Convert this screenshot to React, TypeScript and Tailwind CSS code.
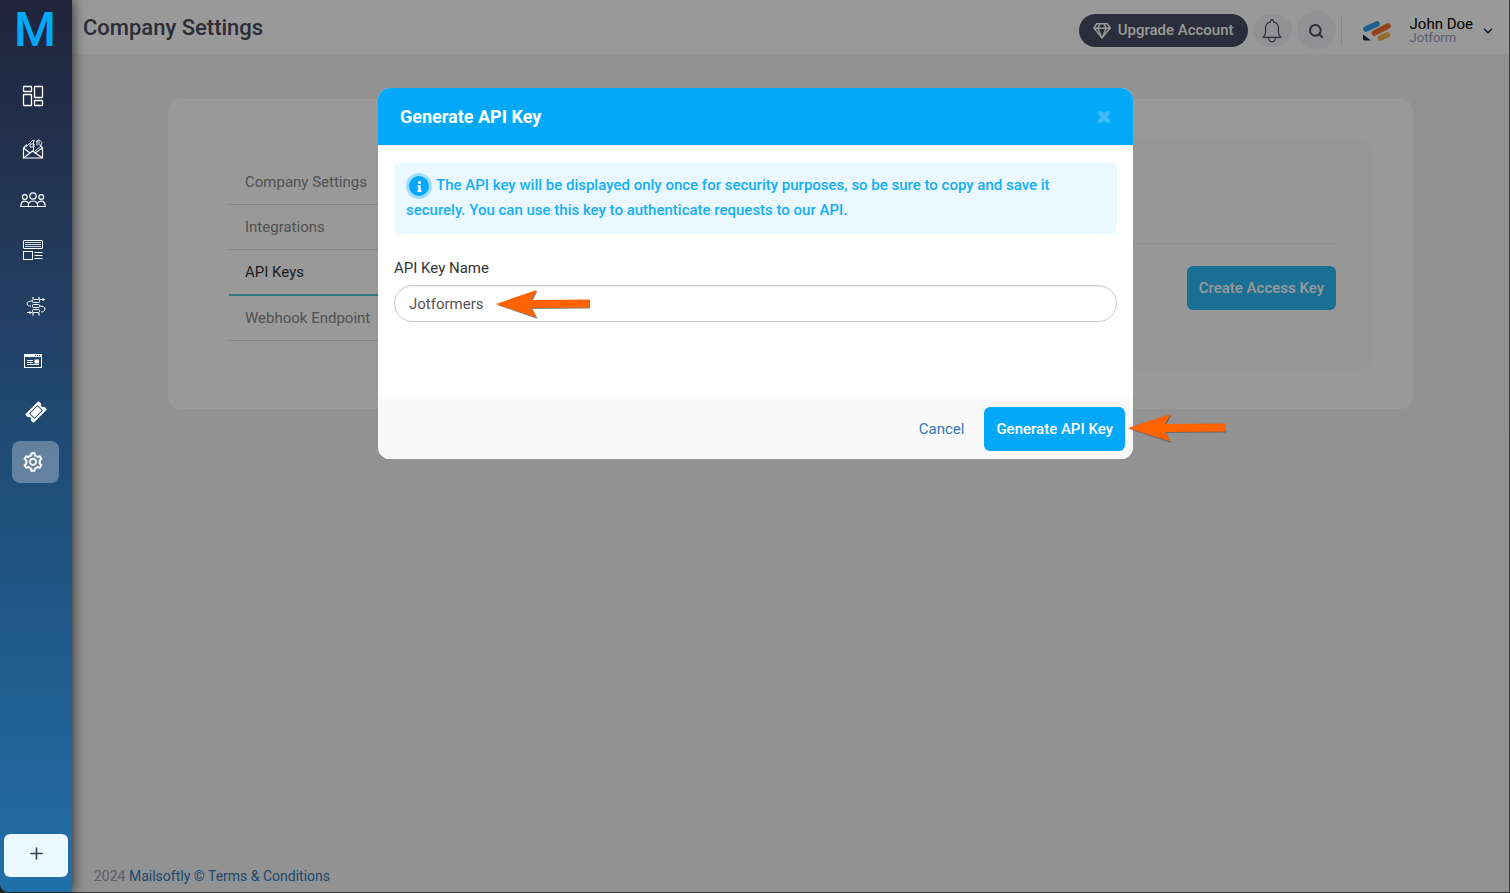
// REACT
import React from 'react';

// ICONS
import { AiOutlineSetting } from 'react-icons/ai';
import { FaInfo, FaRegGem } from 'react-icons/fa';
import { ChevronDown, Plus, Search, X } from 'lucide-react';

// EXTERNAL
import clsx from 'clsx';

const navItems = [
  { label: 'Dashboard', icon: <DashboardIcon />, size: 'h-[42px]' },
  { label: 'Campaigns', icon: <MailIcon />, size: 'h-[46px]' },
  { label: 'Contacts', icon: <PeopleIcon />, size: 'h-[38px]' },
  { label: 'Templates', icon: <TemplateIcon />, size: 'h-[44px]' },
  { label: 'Automations', icon: <FlowIcon />, size: 'h-[50px]', wide: true },
  { label: 'Forms', icon: <FormIcon />, size: 'h-[42px]' },
  { label: 'Tickets', icon: <TicketIcon />, size: 'h-[41px]', wide: true },
  {
    label: 'Settings',
    icon: <AiOutlineSetting size={22} stroke="currentColor" strokeWidth={24} />,
    size: 'h-[42px]',
    active: true,
  },
];

const settingsLinks = [
  'Company Settings',
  'Integrations',
  'API Keys',
  'Webhook Endpoint',
];

export default function App() {
  return (
    <div className="relative flex min-h-screen border-b border-r border-[#3c3c3c] bg-[#3c3c3c] font-[Roboto,sans-serif] text-[15px] leading-5">
      <Sidebar />

      <div className="flex min-w-0 flex-1 flex-col bg-[#f3f3f3]">
        <Header />
        <main className="mr-1 border-b border-r border-[#eeeeee] pt-[45px] pr-[91px] pb-[22px] pl-24">
          <CompanySettings />
        </main>
        <footer className="mt-auto px-[22px] pb-[6px] text-sm text-[#989cab]">
          2024{' '}
          <a href="#terms" className="text-[#337ab7]">
            Mailsoftly © Terms &amp; Conditions
          </a>
        </footer>
      </div>

      {/* MODAL */}
      <div className="absolute inset-0 z-10 bg-black/40 pt-[88px] pr-4 pl-[18px]">
        <GenerateKeyModal />
      </div>
    </div>
  );
}

function Sidebar() {
  return (
    <aside className="z-20 flex w-[72px] shrink-0 flex-col rounded-bl-lg bg-linear-to-b from-[#20243b] via-[#1f4b75] to-[#2170a9] px-1 shadow-[2px_0_12px_rgba(0,0,0,0.6)]">
      <a
        href="#home"
        className="flex h-[60px] items-center pl-[10px] text-5xl font-medium text-[#03a9f8]"
      >
        M
      </a>
      <nav className="mt-[15px] flex flex-col gap-[9px] pl-2">
        {navItems.map((item) => (
          <a
            key={item.label}
            href="#nav"
            aria-label={item.label}
            className={clsx(
              'flex w-[47px] items-center justify-center rounded-lg text-white',
              item.size,
              item.wide ? 'pr-0' : 'pr-[5px]',
              item.active && 'bg-white/30'
            )}
          >
            {item.icon}
          </a>
        ))}
      </nav>
      <button
        aria-label="Create"
        className="mt-auto mb-[15px] flex h-[43px] items-center justify-center rounded-md bg-[#ebf8ff] pb-1 text-[#383e56]"
      >
        <Plus size={19} strokeWidth={2} />
      </button>
    </aside>
  );
}

function Header() {
  return (
    <header className="flex h-[54px] items-center justify-between bg-white pl-[11px] pr-[14px]">
      <h1 className="pt-0.5 text-[22px] leading-7 font-medium text-[#484b5e]">
        Company Settings
      </h1>
      <div className="flex items-center pt-[7px]">
        <button className="flex h-[33px] items-center gap-[7px] rounded-full bg-[#484c63] px-[14px] pb-0.5 font-medium text-white">
          <FaRegGem size={16} className="mt-0.5 w-[18px]" />
          Upgrade Account
        </button>
        <button
          aria-label="Notifications"
          className="ml-[5px] flex h-[33px] w-[39px] items-center justify-center rounded-full bg-[#f3f4f7] text-[#484c63]"
        >
          <BellIcon />
        </button>
        <button
          aria-label="Search"
          className="ml-[5px] flex size-[39px] items-center justify-center rounded-full bg-[#f3f4f7] text-[#484c63]"
        >
          <Search size={16} strokeWidth={3} />
        </button>
        <div className="ml-[5px] h-[30px] w-px bg-[#e0e0e6]" />
        <button className="flex items-center pl-5 text-left">
          <CompanyLogo />
          <span className="ml-[18px] flex flex-col pb-px">
            <span className="leading-4 text-black">John Doe</span>
            <span className="text-[13px] leading-3 text-[#9a9eb5]">
              Jotform
            </span>
          </span>
          <ChevronDown
            size={14}
            strokeWidth={2.5}
            className="ml-2 text-[#20243b]"
          />
        </button>
      </div>
    </header>
  );
}

function CompanySettings() {
  return (
    <section className="flex items-start rounded-xl bg-white py-[39px] pl-[61px] pr-[39px]">
      <ul className="mt-[22px] w-1/4">
        {settingsLinks.map((link) => (
          <li key={link}>
            <a
              href="#settings"
              className={clsx(
                'block px-4 py-3',
                link === 'API Keys'
                  ? 'border-b-2 border-[#4fc3d0] text-[#333333]'
                  : 'border-b border-[#dddddd] text-[#888888]'
              )}
            >
              {link}
            </a>
          </li>
        ))}
      </ul>
      <div className="ml-8 h-[232px] flex-1 rounded-xl bg-[#fcfcfc] px-[38px] pt-[105px]">
        <div className="flex justify-end border-t border-[#eeeeee] pt-[22px]">
          <button className="h-11 rounded-md bg-[#2eb9f8] px-3 font-medium text-white">
            Create Access Key
          </button>
        </div>
      </div>
    </section>
  );
}

function GenerateKeyModal() {
  return (
    <div
      role="dialog"
      aria-labelledby="modal-title"
      className="mx-auto max-w-[755px] rounded-xl bg-white"
    >
      <div className="flex h-[57px] items-center justify-between rounded-t-xl bg-[#03a9f8] pl-[22px] pr-[21px]">
        <h2 id="modal-title" className="text-lg font-bold text-white">
          Generate API Key
        </h2>
        <button aria-label="Close" className="text-[#42bdfa]">
          <X size={16} strokeWidth={6} />
        </button>
      </div>

      <div className="px-4 pt-[17px] pb-[77px]">
        <p className="rounded-md bg-[#ebf8ff] py-[11px] pl-3 pr-10 leading-[25px] font-medium text-[#13aff8]">
          <span className="-my-1 mr-1 inline-flex size-[26px] items-center justify-center rounded-full border-3 border-[#a0dcfb] bg-[#03a9f8] align-middle text-white">
            <FaInfo size={11} />
          </span>
          The API key will be displayed only once for security purposes, so be
          sure to copy and save it securely. You can use this key to
          authenticate requests to our API.
        </p>

        <label htmlFor="keyName" className="mt-6 block text-[#333333]">
          API Key Name
        </label>
        <div className="relative mt-[7px]">
          <input
            id="keyName"
            type="text"
            defaultValue="Jotformers"
            className="block h-[37px] w-full rounded-full border border-[#cccccc] px-[14px] text-[#555555] shadow-[inset_0_1px_1px_rgba(0,0,0,0.075)]"
          />
          <Arrow className="absolute top-1 left-[102px] w-[95px]" />
        </div>
      </div>

      <div className="flex h-[60px] items-center justify-end gap-5 rounded-b-xl bg-[#f9f9f9] pr-2">
        <button className="text-[#337ab7]">Cancel</button>
        <div className="relative">
          <button className="h-11 rounded-md bg-[#03a9f8] px-3 font-medium text-white">
            Generate API Key
          </button>
          <Arrow className="absolute top-[6px] left-full ml-[3px] w-[99px]" />
        </div>
      </div>
    </div>
  );
}

function Arrow({ className }: { className: string }) {
  return (
    <svg
      viewBox="0 0 96 30"
      preserveAspectRatio="none"
      className={clsx('h-[30px]', className)}
    >
      <path
        d="M1 16 42 2 37 12 95 11.5V19.5L37 20 42 30Z"
        fill="#555"
        opacity="0.7"
      />
      <path d="M0 15 41 1 36 11 95 10.5V18.5L36 19 41 28.5Z" fill="#ff6200" />
    </svg>
  );
}

function CompanyLogo() {
  return (
    <svg width="30" height="22" viewBox="0 0 30 22">
      <g strokeWidth="5.6" strokeLinecap="round">
        <path d="M4 9 15 4" stroke="#2aa0ea" />
        <path d="M12.500 13 26 6" stroke="#f5702a" />
        <path d="M18.500 18 25.500 14.800" stroke="#f7b64a" />
      </g>
      <path d="M1 14.500 9 20.500H2.500Q1 20.500 1 19Z" fill="#20275a" />
    </svg>
  );
}

function BellIcon() {
  return (
    <svg
      width="20"
      height="24"
      viewBox="0 0 20 24"
      fill="none"
      stroke="currentColor"
      strokeWidth="1.2"
      strokeLinejoin="round"
    >
      <path d="M8.5 3V2.4a1.5 1.5 0 0 1 3 0V3c3.200.6 5 3 5 6.200v4.300c0 2 .8 3.200 2.500 4.900H1c1.700-1.700 2.500-2.900 2.500-4.900V9.200C3.500 6 5.300 3.600 8.500 3Z" />
      <path d="M6.500 18.500a3.500 4.300 0 0 0 7 0" />
    </svg>
  );
}

function DashboardIcon() {
  return (
    <svg
      width="22"
      height="22"
      viewBox="0 0 22 22"
      fill="none"
      stroke="currentColor"
      strokeWidth="1.3"
    >
      <rect x="1.500" y="1.500" width="8" height="5" rx=".5" />
      <rect x="1.500" y="9.500" width="8" height="11" rx=".5" />
      <rect x="12.500" y="1.500" width="8" height="11" rx=".5" />
      <rect x="12.500" y="15.500" width="8" height="5" rx=".5" />
    </svg>
  );
}

function MailIcon() {
  return (
    <svg
      width="22"
      height="22"
      viewBox="0 0 22 22"
      fill="none"
      stroke="currentColor"
      strokeWidth="1.200"
    >
      <path d="M5 6.500 1.500 10v10h19V10L18 7" />
      <path d="m1.500 10 6.500 5m-6.500 5 9-7 10 7m-7.500-5 7.500-5" />
      <path d="M4 9 11 2l2 1M14 4l3-2.500 3 3-1.500 4-6 5" strokeWidth=".8" />
      <path d="M8 6h4v3H8zM15 2.500v5M17 2v5M11.500 3v10" strokeWidth=".9" />
    </svg>
  );
}

function PeopleIcon() {
  return (
    <svg
      width="26"
      height="18"
      viewBox="0 0 26 18"
      fill="none"
      stroke="currentColor"
      strokeWidth="1.200"
    >
      <circle cx="13" cy="5" r="3.200" />
      <circle cx="4.800" cy="6" r="2.400" />
      <circle cx="21.200" cy="6" r="2.400" />
      <path d="M8.200 15.500C8.200 12 10 10 13 10s4.800 2 4.800 5.500Z" />
      <path d="M8.200 15.500H.8c0-3.400 1.400-5.300 4-5.300 2 0 3.200.9 3.900 2.300M17.800 15.500h7.400c0-3.400-1.400-5.300-4-5.300-2 0-3.200.9-3.900 2.300" />
    </svg>
  );
}

function TemplateIcon() {
  return (
    <svg
      width="22"
      height="22"
      viewBox="0 0 22 22"
      fill="none"
      stroke="currentColor"
    >
      <rect x="1.500" y="1.500" width="19" height="8" rx=".5" />
      <path d="M3 3.500h16M3 5.500h16M3 7.500h16" strokeWidth=".8" />
      <rect x="1.500" y="12.500" width="9" height="8" />
      <path d="M12.500 13.500h8M12.500 16.500h8M12.500 19.500h8" />
    </svg>
  );
}

function FlowIcon() {
  return (
    <svg
      width="20"
      height="20"
      viewBox="0 0 20 20"
      fill="none"
      stroke="currentColor"
    >
      <path d="M7 1v2M13 1v2M7 17v2.500M13 17v2.500" strokeWidth="1.200" />
      <rect x="6.500" y="3.500" width="7" height="3" rx="1" />
      <rect x="6.500" y="8.500" width="7" height="3" rx="1" />
      <rect x="6.500" y="13.500" width="7" height="3" rx="1" />
      <path d="M13.500 3.500H19M17 2v3M6.500 5C3 5 1 6 1 7.800S3 10 5 10M13.500 10c3.500 0 5.500 1 5.500 3s-2 3-4 3M1 16.500h5.500M4 15v3" />
    </svg>
  );
}

function FormIcon() {
  return (
    <svg width="20" height="16" viewBox="0 0 20 16" fill="none">
      <rect x="1.500" y="1.500" width="17" height="13" stroke="currentColor" />
      <path d="M1 1h18v3H1z" fill="currentColor" />
      <path d="M12 2.500h1M14 2.500h1M16 2.500h1" stroke="#1f426a" />
      <path d="M4 7.500h6M4 9.500h6M4 11.500h12" stroke="currentColor" />
      <path d="M11.500 6.500h4.500v4h-4.500z" fill="currentColor" />
    </svg>
  );
}

function TicketIcon() {
  return (
    <svg width="22" height="22" viewBox="0 0 22 22">
      <g transform="rotate(-45 11 11)">
        <path
          d="M2.500 5h17a1 1 0 0 1 1 1v2.800a2.300 2.300 0 0 0 0 4.400V16a1 1 0 0 1-1 1h-17a1 1 0 0 1-1-1v-2.800a2.300 2.300 0 0 0 0-4.400V6a1 1 0 0 1 1-1Z"
          fill="currentColor"
        />
        <rect
          x="5.500"
          y="7.500"
          width="11"
          height="7"
          fill="none"
          stroke="#28527a"
        />
      </g>
    </svg>
  );
}
